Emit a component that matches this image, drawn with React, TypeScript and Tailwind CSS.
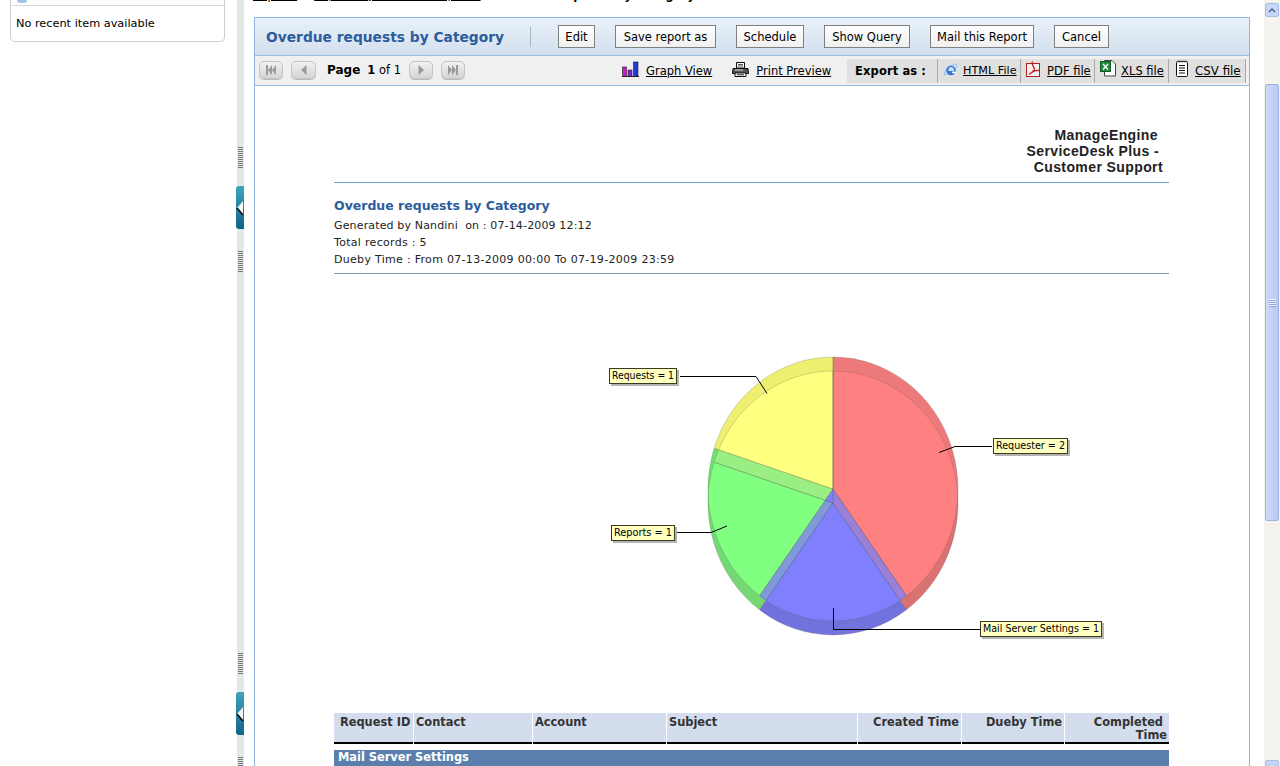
import React from "react";

const CX = 833, RX = 125, RY = 132, TOP = 489, BOT = 503;
const pt = (cy: number, a: number) => {
  const r = (a * Math.PI) / 180;
  return [CX + RX * Math.sin(r), cy - RY * Math.cos(r)].map((v) => v.toFixed(2)).join(" ");
};
const sector = (cy: number, a0: number, a1: number) =>
  `M${CX} ${cy} L${pt(cy, a0)} A${RX} ${RY} 0 ${a1 - a0 > 180 ? 1 : 0} 1 ${pt(cy, a1)} Z`;

const slices = [
  { a: [0, 144], main: "#ff8080", topOnly: "#ec7a7a", botOnly: "#da7272" },
  { a: [144, 216], main: "#8080ff", topOnly: "#7272e0", botOnly: "#7272dc" },
  { a: [216, 288], main: "#80ff80", topOnly: "#70e070", botOnly: "#74d874" },
  { a: [288, 360], main: "#ffff80", topOnly: "#eeee70", botOnly: "#eeee70" },
];
const mix: Record<string, string> = {
  "2-3": "#9bef82",
  "1-2": "#8099d8",
  "1-0": "#9a80d6",
};

function Pie() {
  return (
    <svg viewBox="334 280 835 430" className="block w-[835px] h-[430px]">
      <defs>
        {slices.map((s, i) => (
          <clipPath id={`top${i}`} key={i}>
            <path d={sector(TOP, s.a[0], s.a[1])} />
          </clipPath>
        ))}
      </defs>
      {slices.map((s, i) => (
        <path key={`b${i}`} d={sector(BOT, s.a[0], s.a[1])} fill={s.botOnly} />
      ))}
      {slices.map((s, i) => (
        <path key={`t${i}`} d={sector(TOP, s.a[0], s.a[1])} fill={s.topOnly} />
      ))}
      {slices.map((s, i) =>
        slices.map((b, j) => (
          <path
            key={`x${i}${j}`}
            d={sector(BOT, b.a[0], b.a[1])}
            clipPath={`url(#top${i})`}
            fill={i === j ? s.main : mix[`${i}-${j}`] || s.main}
          />
        ))
      )}
      {slices.map((s, i) => (
        <g key={`s${i}`} fill="none" stroke="#555" strokeOpacity="0.22" strokeWidth="1">
          <path d={sector(TOP, s.a[0], s.a[1])} />
          <path d={sector(BOT, s.a[0], s.a[1])} />
        </g>
      ))}
      <g fill="none" stroke="#000" strokeWidth="1">
        <path d="M680 376.5H756L767 393.5" />
        <path d="M675 532.5H711L727 526" />
        <path d="M992 446.5H955L939 452.5" />
        <path d="M980 629.5H833.5V608" />
      </g>
      {[
        { x: 609, y: 368, w: 67, t: "Requests = 1" },
        { x: 611, y: 525, w: 63, t: "Reports = 1" },
        { x: 993, y: 438, w: 74, t: "Requester = 2" },
        { x: 980, y: 621, w: 121, t: "Mail Server Settings = 1" },
      ].map((l) => (
        <g key={l.t}>
          <rect x={l.x + 2} y={l.y + 2} width={l.w + 1} height={16} fill="#b4b4b4" />
          <rect x={l.x + 0.5} y={l.y + 0.5} width={l.w} height={15} fill="#ffffc0" stroke="#3a3a20" />
          <text
            x={l.x + 3}
            y={l.y + 11}
            fontSize="10"
            fill="#000"
            fontFamily="'DejaVu Sans Condensed','Liberation Sans Narrow','DejaVu Sans',sans-serif"
            textLength={l.w - 5}
            lengthAdjust="spacingAndGlyphs"
          >
            {l.t}
          </text>
        </g>
      ))}
    </svg>
  );
}

function Grip() {
  return (
    <div className="ml-px h-[22px] w-[5px] shrink-0 bg-[repeating-linear-gradient(to_bottom,#777_0,#777_1px,#e0e8e8_1px,#e0e8e8_2px)]" />
  );
}

function Handle() {
  return (
    <div className="relative -ml-px flex h-[43px] w-[8px] shrink-0 items-center rounded-l-[3px] bg-gradient-to-b from-[#40a4bc] to-[#0c6488]">
      <svg width="8" height="16" viewBox="0 0 8 16" className="block">
        <path d="M7 1V15L1 8Z" fill="#f4f6f4" />
        <path d="M1 8L7 15" stroke="#000" strokeWidth="1.4" fill="none" />
      </svg>
    </div>
  );
}

function Strip() {
  return (
    <div className="flex h-full w-[7px] shrink-0 flex-col bg-[#e0e8e8] pt-[147px]">
      <Grip />
      <div className="mt-[17px] shrink-0"><Handle /></div>
      <div className="mt-[22px] shrink-0"><Grip /></div>
      <div className="mt-[380px] shrink-0"><Grip /></div>
      <div className="mt-[17px] shrink-0"><Handle /></div>
      <div className="mt-[22px] shrink-0"><Grip /></div>
    </div>
  );
}

function ToolBtn({ w, label }: { w: string; label: string }) {
  return (
    <div
      className={`flex h-[23px] items-center justify-center border border-[#808080] bg-gradient-to-b from-white to-[#f0f0f0] pt-[2px] text-[11.5px] whitespace-nowrap text-black ${w}`}
    >
      {label}
    </div>
  );
}

function NavBtn({ w, kind }: { w: string; kind: "first" | "prev" | "next" | "last" }) {
  const c = "#9a9a9a";
  return (
    <div
      className={`mb-[2px] flex h-[18px] items-center justify-center rounded-[5px] border border-[#c4c4c4] bg-gradient-to-b from-[#f2f2f2] to-[#d4d4d4] shadow-[0_1px_0_#bbb] ${w}`}
    >
      <svg width="14" height="12" viewBox="0 0 14 12">
        {kind === "first" && <path d="M2 1H4V11H2ZM8 1V11L4 6ZM12 1V11L8 6Z" fill={c} />}
        {kind === "prev" && <path d="M9.500 1V11L4 6Z" fill={c} />}
        {kind === "next" && <path d="M4.500 1V11L10 6Z" fill={c} />}
        {kind === "last" && <path d="M10 1H12V11H10ZM2 1V11L6 6ZM6 1V11L10 6Z" fill={c} />}
      </svg>
    </div>
  );
}

function GraphIcon() {
  return (
    <svg width="17" height="16" viewBox="0 0 17 16" className="mb-[3px] block">
      <rect x="0.500" y="6" width="4" height="9.500" fill="#c818c8" stroke="#222" strokeWidth="0.600" />
      <rect x="6" y="9" width="4" height="6.500" fill="#8020d0" stroke="#222" strokeWidth="0.600" />
      <rect x="11.500" y="1" width="4.500" height="14.500" fill="#2438e0" stroke="#222" strokeWidth="0.600" />
      <path d="M0 15.500H17" stroke="#222" />
    </svg>
  );
}
function PrinterIcon() {
  return (
    <svg width="17" height="15" viewBox="0 0 17 15" className="mb-[3px] block">
      <path d="M4.500 .5H12.500V6H4.500Z" fill="#fff" stroke="#111" />
      <path d="M6 2.500H11M6 4H11" stroke="#555" />
      <path d="M1 6.500H16L16.500 11.500H.5Z" fill="#555" stroke="#111" />
      <path d="M3 8H11" stroke="#ddd" />
      <path d="M3 11H14V14.500H3Z" fill="#fff" stroke="#111" />
      <path d="M5 12.800H12" stroke="#222" />
    </svg>
  );
}
function IeIcon() {
  return (
    <svg width="14" height="14" viewBox="0 0 14 14" className="mb-[2px] block">
      <path d="M3 11C-1 14 0 9 3 6C6 3 11 0 12.500 1.500C13.500 2.500 12.500 4 12 5" fill="none" stroke="#9cc4f0" strokeWidth="1.200" />
      <circle cx="7" cy="7.500" r="4.800" fill="#2f78d8" />
      <rect x="4.500" y="6.300" width="5.500" height="1.500" fill="#fff" />
      <path d="M4.500 6.300A2.700 2.700 0 0 1 9.800 6.300Z" fill="#cfe2fa" />
      <rect x="8" y="8.600" width="4" height="1.600" fill="#fff" />
    </svg>
  );
}
function PdfIcon() {
  return (
    <svg width="15" height="16" viewBox="0 0 15 16" className="mb-[3px] block">
      <rect x="0.500" y="2.500" width="13" height="13" fill="#f2f2f2" stroke="#b02020" />
      <path d="M6.500 .5C5 3 8.500 7 8.500 8C8.500 9 5 12 3 13.500C6 11 10 9 13 9.500" fill="none" stroke="#d01818" strokeWidth="1.300" />
    </svg>
  );
}
function XlsIcon() {
  return (
    <svg width="17" height="17" viewBox="0 0 17 17" className="mb-[4px] block">
      <path d="M4.500 .5H12L15.500 4V16H4.500Z" fill="#fff" stroke="#444" />
      <rect x="0.500" y="1.500" width="10" height="10" fill="#1f8a3a" stroke="#145a24" />
      <path d="M3 4L8 9.500M8 4L3 9.500" stroke="#fff" strokeWidth="1.300" />
    </svg>
  );
}
function CsvIcon() {
  return (
    <svg width="14" height="17" viewBox="0 0 14 17" className="mb-[4px] block">
      <rect x="1.500" y="1.500" width="11" height="15" rx="1" fill="#fff" stroke="#111" />
      <path d="M3 .5V2.500M5 .5V2.500M7 .5V2.500M9 .5V2.500M11 .5V2.500" stroke="#555" />
      <path d="M4 5.500H10M4 8H10M4 10.500H10M4 13H10" stroke="#111" />
    </svg>
  );
}

function Cell({ w, right, children }: { w: string; right?: boolean; children: React.ReactNode }) {
  return (
    <div
      className={`h-[31px] border-b-2 border-black bg-[#d4ddee] pt-[3px] text-[11.4px] leading-[13px] font-bold whitespace-nowrap text-[#333] ${w} ${
        right ? "pr-[2px] text-right" : "pl-[2px]"
      }`}
    >
      {children}
    </div>
  );
}

export default function App() {
  return (
    <div className="flex h-[766px] w-[1280px] overflow-hidden bg-white font-['DejaVu_Sans',Verdana,sans-serif] text-black">
      {/* left column */}
      <aside className="w-[237px] shrink-0 pl-[10px] pr-[12px]">
        <div className="h-[42px] rounded-b-[5px] border border-t-0 border-[#cfcfcf]">
          <div className="h-[6px] border-b border-[#d8d8d8]">
            <div className="ml-[6px] h-[3px] w-[10px] rounded-b-full bg-[#a8c4e4]" />
          </div>
          <div className="pl-[5px] pt-[11px] text-[11.3px] leading-[14px] whitespace-nowrap">No recent item available</div>
        </div>
      </aside>

      <Strip />

      {/* main */}
      <main className="min-w-0 flex-1 pl-[10px] pr-[14px]">
        <div className="-mt-[12px] flex h-[29px] items-baseline text-[11.5px] leading-[14px] whitespace-nowrap">
          <span className="ml-[-1px] underline">Reports</span>
          <span className="ml-[5px]">»</span>
          <span className="ml-[5px] text-[11.2px] underline">Reports by Overdue Requests</span>
          <span className="ml-[16px] font-bold">Overdue requests by Category</span>
        </div>

        <section className="h-[760px] border border-[#8fb5e0]">
          {/* title bar */}
          <div className="flex h-[38px] items-center border-b border-[#98bbe2] bg-gradient-to-b from-[#e9f1f9] to-[#d2e0ee] pl-[11px]">
            <div className="w-[264px] shrink-0 pt-[2px] text-[13.8px] font-bold whitespace-nowrap text-[#2c5c9c]">
              Overdue requests by Category
            </div>
            <div className="h-[20px] w-px shrink-0 bg-[#a8b4c0]" />
            <div className="ml-[27px] flex gap-5">
              <ToolBtn w="w-[37px]" label="Edit" />
              <ToolBtn w="w-[101px]" label="Save report as" />
              <ToolBtn w="w-[68px]" label="Schedule" />
              <ToolBtn w="w-[86px]" label="Show Query" />
              <ToolBtn w="w-[104px]" label="Mail this Report" />
              <ToolBtn w="w-[55px]" label="Cancel" />
            </div>
          </div>

          {/* paging bar */}
          <div className="flex h-[30px] items-center border-b border-[#98bbe2] bg-[#f0f0f0] pl-[4px] text-[11.5px]">
            <NavBtn w="w-[24px]" kind="first" />
            <NavBtn w="w-[25px] ml-[8px]" kind="prev" />
            <div className="ml-[11px] w-[82px] shrink-0 whitespace-nowrap">
              <b className="text-[12px]">Page</b>
              <b className="ml-[7px]">1</b> of 1
            </div>
            <NavBtn w="w-[24px]" kind="next" />
            <NavBtn w="w-[24px] ml-[8px]" kind="last" />
            <div className="ml-[157px] flex items-center gap-[7px]">
              <GraphIcon />
              <span className="pt-[2px] underline">Graph View</span>
            </div>
            <div className="ml-[20px] flex items-center gap-[7px]">
              <PrinterIcon />
              <span className="pt-[2px] underline">Print Preview</span>
            </div>
            <div className="ml-[16px] flex h-[24px] items-center bg-[#e0e0e0]">
              <div className="w-[91px] border-r border-[#a8a8a8] pl-[8px] leading-[24px] font-bold tracking-[0.1px] whitespace-nowrap">Export as :</div>
              <div className="flex h-[24px] w-[83px] items-center gap-[5px] border-r border-[#a8a8a8] pl-[6px]">
                <IeIcon />
                <span className="pt-[2px] text-[11.2px] underline">HTML File</span>
              </div>
              <div className="flex h-[24px] w-[74px] items-center gap-[6px] border-r border-[#a8a8a8] pl-[5px]">
                <PdfIcon />
                <span className="pt-[2px] underline">PDF file</span>
              </div>
              <div className="flex h-[24px] w-[74px] items-center gap-[4px] border-r border-[#a8a8a8] pl-[5px]">
                <XlsIcon />
                <span className="pt-[2px] underline">XLS file</span>
              </div>
              <div className="flex h-[24px] w-[77px] items-center gap-[6px] border-r border-[#a8a8a8] pl-[6px]">
                <CsvIcon />
                <span className="pt-[2px] text-[11.8px] underline">CSV file</span>
              </div>
            </div>
          </div>

          {/* report */}
          <div className="ml-[79px] w-[835px]">
            <div className="flex h-[97px] flex-col items-end border-b border-[#6fa3d8] pt-[41px] font-['Liberation_Sans',Arial,sans-serif] text-[14px] leading-[16px] font-bold tracking-[0.4px] text-[#222]">
              <div className="pr-[11px]">ManageEngine</div>
              <div className="pr-[10px]">ServiceDesk Plus -</div>
              <div className="pr-[6px]">Customer Support</div>
            </div>
            <div className="h-[91px] border-b border-[#7c9cc0] pt-[15px]">
              <div className="text-[12.5px] leading-[16px] font-bold text-[#2c5c9c]">Overdue requests by Category</div>
              <div className="mt-[3px] text-[11px] leading-[17px] tracking-[0.3px] text-[#222]">
                <div className="tracking-[0.15px] whitespace-pre">Generated by Nandini  on : 07-14-2009 12:12</div>
                <div>Total records : 5</div>
                <div>Dueby Time : From 07-13-2009 00:00 To 07-19-2009 23:59</div>
              </div>
            </div>
            <div className="h-[439px] pt-[6px]">
              <Pie />
            </div>
            <div className="flex gap-px">
              <Cell w="w-[79px]">&nbsp;Request ID</Cell>
              <Cell w="w-[118px]">Contact</Cell>
              <Cell w="w-[133px]">Account</Cell>
              <Cell w="w-[190px]">Subject</Cell>
              <Cell w="w-[103px]" right>Created Time</Cell>
              <Cell w="w-[102px]" right>Dueby Time</Cell>
              <Cell w="w-[104px]" right>Completed&nbsp;<br />Time</Cell>
            </div>
            <div className="mt-[6px] h-[17px] bg-[#5a7fac] pl-[4px] text-[11.4px] leading-[15px] font-bold text-white">
              Mail Server Settings
            </div>
          </div>
        </section>
      </main>

      {/* page scrollbar */}
      <div className="flex h-full w-[16px] shrink-0 flex-col bg-[#f5f3ee] pl-[1px] pr-[1px] pt-[3px]">
        <div className="flex h-[14px] shrink-0 items-center justify-center rounded-[2px] border border-[#a9bde6] bg-[#c6d6f8]">
          <svg width="8" height="6" viewBox="0 0 8 6">
            <path d="M1 5L4 2L7 5" fill="none" stroke="#4d6185" strokeWidth="1.500" />
          </svg>
        </div>
        <div className="mt-[67px] flex h-[437px] shrink-0 items-center justify-center rounded-[2px] border border-[#a0b4e0] bg-gradient-to-r from-[#cddafa] to-[#b6c9f4]">
          <div className="h-[8px] w-[7px] bg-[repeating-linear-gradient(to_bottom,#eef3ff_0,#eef3ff_1px,#8ea6dc_1px,#8ea6dc_2px)]" />
        </div>
        <div className="mt-[239px] h-[14px] shrink-0 rounded-[2px] border border-[#a9bde6] bg-[#c6d6f8]" />
      </div>
    </div>
  );
}
